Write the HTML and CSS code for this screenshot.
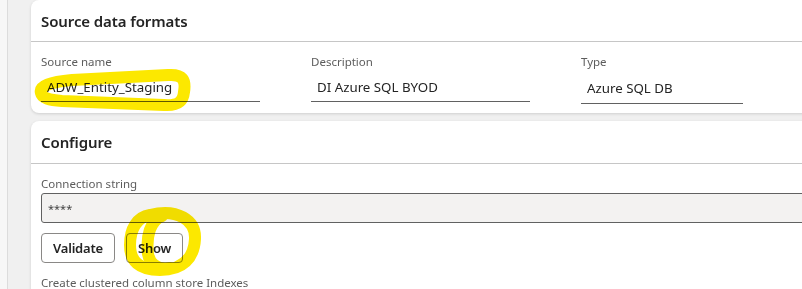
FILE: index.html
```html
<!DOCTYPE html>
<html>
  <head>
    <title>Data source</title>
    <meta name="viewport" content="width=device-width, initial-scale=1.0" />
    <link rel="stylesheet" href="styles.css">
  </head>
  <body>
    <div class="nav-strip"></div>
    <div class="main">
      <div class="card card-first">
        <div class="card-header">Source data formats</div>
        <div class="card-body fields">
          <div class="field">
            <div class="label">Source name</div>
            <div class="line-input">ADW_Entity_Staging</div>
          </div>
          <div class="field">
            <div class="label">Description</div>
            <div class="line-input">DI Azure SQL BYOD</div>
          </div>
          <div class="field field-type">
            <div class="label">Type</div>
            <div class="line-input">Azure SQL DB</div>
          </div>
        </div>
      </div>

      <div class="card">
        <div class="card-header">Configure</div>
        <div class="card-body">
          <div class="label">Connection string</div>
          <div class="box-input">****</div>
          <div class="actions">
            <button class="btn">Validate</button>
            <button class="btn">Show</button>
          </div>
          <div class="label label-next">Create clustered column store Indexes</div>
        </div>
      </div>
    </div>

    <!-- marker scribbles from the screenshot -->
    <svg class="marker" width="802" height="289" viewBox="0 0 802 289">
      <path d="M41,93 C39,86 50,82 72,80 L168,75 C183,74 186,80 184,92 C183,102 178,106 164,105 L62,101 C49,100 42,98 41,93 Z" />
      <path d="M150,215 C177,208 196,220 195,239 C194,258 183,270 160,270 C139,270 130,261 130,245 C130,229 137,217 150,215 Z" />
      <path d="M162,216 C150,221 146,236 148,254 C150,265 158,270 170,268" />
    </svg>
  </body>
</html>
```

FILE: styles.css
```css
body {
  margin: 0;
  display: flex;
  height: 289px;
  overflow: hidden;
  background: #f0f0f0;
  font-family: "Noto Sans", "Open Sans", sans-serif;
  color: #242424;
}
.nav-strip {
  width: 7px;
  flex-shrink: 0;
  background: #f7f7f7;
  border-right: 1px solid #dcdcdc;
}
.main {
  padding-left: 23px;
  display: flex;
  flex-direction: column;
  gap: 8px;
}
.card {
  width: 1000px;
  background: #fff;
  border-radius: 8px;
  box-shadow: 0 1px 3px rgba(0, 0, 0, 0.14);
}
.card-header {
  height: 42px;
  padding-left: 10px;
  display: flex;
  align-items: center;
  font-size: 15px;
  font-weight: 600;
  letter-spacing: -0.1px;
  border-bottom: 1px solid #c6c6c6;
}
.card-first .card-header {
  height: 41px;
}
.card-body {
  padding: 12px 10px 12px 10px;
}
.fields {
  display: flex;
  padding-bottom: 9px;
}
.field {
  width: 219px;
  margin-right: 51px;
}
.field-type {
  width: 162px;
}
.label {
  font-size: 11.5px;
  line-height: 16px;
  color: #5c5c5c;
}
.line-input {
  height: 29px;
  padding: 2px 6px 0;
  display: flex;
  align-items: center;
  font-size: 13.3px;
  color: #242424;
  border-bottom: 1px solid #616161;
}
.field-type .line-input {
  height: 31px;
}
.box-input {
  margin-top: 1px;
  height: 28px;
  padding: 0 6px;
  display: flex;
  align-items: center;
  font-size: 11px;
  color: #444;
  background: #f3f2f1;
  border: 1px solid #616161;
  border-radius: 3px;
}
.actions {
  display: flex;
  gap: 11px;
  margin-top: 10px;
}
.btn {
  height: 30px;
  padding: 0 11px;
  font-family: inherit;
  font-size: 13px;
  font-weight: 600;
  letter-spacing: -0.2px;
  color: #242424;
  background: #fff;
  border: 1px solid #8a8886;
  border-radius: 4px;
}
.label-next {
  margin-top: 12px;
}
.marker {
  position: absolute;
  left: 0;
  top: 0;
  pointer-events: none;
  mix-blend-mode: multiply;
}
.marker path {
  fill: none;
  stroke: #fce800;
  stroke-width: 12;
  stroke-linecap: round;
  stroke-linejoin: round;
}
```
